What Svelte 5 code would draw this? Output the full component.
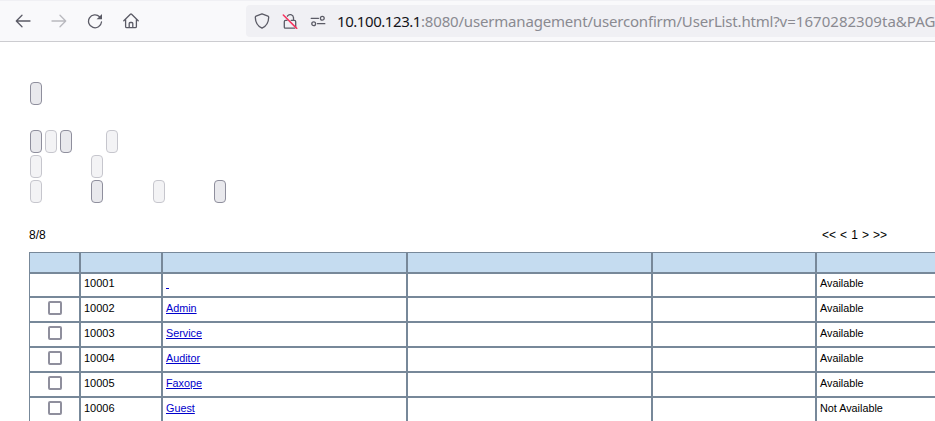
<script>
  const buttonRows = [
    [{ gap: 0 }],
    [{ gap: 0 }, { gap: 3, off: true }, { gap: 3 }, { gap: 34, off: true }],
    [{ gap: 0, off: true }, { gap: 49, off: true }],
    [{ gap: 0, off: true }, { gap: 49 }, { gap: 50, off: true }, { gap: 49 }]
  ];
  const users = [
    { id: '10001', name: '\u00a0', status: 'Available', fixed: true },
    { id: '10002', name: 'Admin', status: 'Available' },
    { id: '10003', name: 'Service', status: 'Available' },
    { id: '10004', name: 'Auditor', status: 'Available' },
    { id: '10005', name: 'Faxope', status: 'Available' },
    { id: '10006', name: 'Guest', status: 'Not Available' }
  ];
</script>

<div class="window">
  <header class="toolbar">
    <nav>
      <svg width="16" height="16" viewBox="0 0 16 16"><path d="M15 8H1.5M7 2.3 1.3 8 7 13.7" /></svg>
      <svg class="faded" width="16" height="16" viewBox="0 0 16 16"><path d="M1 8h13.5M9 2.3 14.7 8 9 13.7" /></svg>
      <svg width="16" height="16" viewBox="0 0 16 16"><path d="M12.6 3.7A6.5 6.5 0 1 0 14.5 9" /><path class="solid" d="M15 1v5.2H9.6z" /></svg>
      <svg width="16" height="16" viewBox="0 0 16 16"><path d="M.8 7.8 7.4 1.3a.9.9 0 0 1 1.2 0l6.6 6.5M2.6 6.3v7.2q0 1.2 1.2 1.2h8.4q1.2 0 1.2-1.2V6.3M6.2 14.5v-4q0-1 1-1h1.6q1 0 1 1v4" /></svg>
    </nav>
    <div class="address">
      <svg width="16" height="16" viewBox="0 0 16 16"><path d="M8 .8 14 3.1q.7.3.7 1.1C14.6 9 12.5 13 8 15.2 3.5 13 1.4 9 1.3 4.2q0-.8.7-1.1z" /></svg>
      <svg width="16" height="16" viewBox="0 0 16 16"><path d="M5.4 3.2A3.3 3.3 0 0 1 11.5 4.6V7.4M9.2 7.4h3.2q1.3 0 1.3 1.3V14M12.6 15.2h-9q-1.3 0-1.3-1.2V8.7q0-1.3 1.3-1.3H5" /><path class="slash" d="m1.3 2 13.4 13.4" /></svg>
      <svg width="16" height="16" viewBox="0 0 16 16"><path d="M1.2 5.3h7.3M7.5 10.7h7.3" /><circle cx="12.3" cy="5.2" r="1.9" /><circle cx="3.7" cy="10.7" r="1.9" /></svg>
      <span class="url"><span class="host">10.100.123.1</span><span class="path">:8080/usermanagement/userconfirm/UserList.html?</span><span class="query">v=1670282309ta&amp;PAG</span></span>
    </div>
  </header>

  <main>
    <section class="controls">
      {#each buttonRows as row}
        <div class="row">
          {#each row as b}
            <button aria-label="action" disabled={b.off} style="margin-left: {b.gap}px"></button>
          {/each}
        </div>
      {/each}
    </section>
    <div class="summary"><span class="count">8/8</span><span class="pager">&lt;&lt; &lt; 1 &gt; &gt;&gt;</span></div>
    <div class="table">
      <div class="line head">
        {#each Array(6) as _}<div class="cell"></div>{/each}
      </div>
      {#each users as u}
        <div class="line" class:first={u.fixed}>
          <div class="cell pick">{#if !u.fixed}<span class="box"></span>{/if}</div>
          <div class="cell">{u.id}</div>
          <div class="cell name"><span class="link">{u.name}</span></div>
          <div class="cell"></div>
          <div class="cell"></div>
          <div class="cell name">{u.status}</div>
        </div>
      {/each}
    </div>
  </main>
</div>

<style>
  .window { width: 935px; height: 421px; overflow: hidden; background: #fff; color: #000; font-family: "Liberation Sans", Arial, sans-serif; }
  .toolbar { box-sizing: border-box; height: 42px; display: flex; padding-top: 4px; background: #f9f9fb; border-top: 1px solid #f0f0f4; border-bottom: 1px solid #ccccd0; }
  nav { width: 246px; flex: none; height: 32px; display: flex; align-items: center; gap: 20px; padding-left: 15px; box-sizing: border-box; }
  svg { flex: none; display: block; fill: none; stroke: #5b5b66; stroke-width: 1.3; stroke-linecap: round; stroke-linejoin: round; }
  .faded { opacity: .4; }
  .solid { fill: #5b5b66; stroke: none; }
  .slash { stroke: #f8335f; stroke-width: 1.5; }
  .address { flex: 1; min-width: 0; height: 32px; box-sizing: border-box; display: flex; align-items: center; gap: 12px; padding-left: 8px; background: #f0f0f4; border-radius: 4px 0 0 4px; }
  .url { font: 15px/32px "Noto Sans", sans-serif; color: #8a8a91; white-space: nowrap; margin-left: -1px; }
  .host { color: #15141a; letter-spacing: -.44px; }
  .path { letter-spacing: -.18px; }
  .query { letter-spacing: .03px; }
  main { width: 1100px; padding: 40px 0 0 29px; }
  .controls { padding-left: 1px; }
  .row { display: flex; height: 25px; }
  .row:first-child { height: 48px; }
  button { appearance: none; box-sizing: border-box; width: 12px; height: 23px; padding: 0; border: 1px solid #8f8f9d; border-radius: 4px; background: #e9e9ed; }
  button:disabled { opacity: .5; }
  .summary { display: flex; height: 47px; padding-top: 23px; box-sizing: border-box; font-size: 12px; line-height: 14px; }
  .count { width: 793px; }
  .pager { word-spacing: .75px; }
  .table { display: flex; flex-direction: column; }
  .line { display: grid; grid-template-columns: 51px 82px 245px 245px 164px 245px; height: 25px; font-size: 11px; line-height: 13px; }
  .head { height: 21px; background: #c5dcf0; }
  .first { height: 24px; }
  .cell { box-sizing: border-box; border: 1px solid #778899; padding: 4px 3px; }
  .first .cell { padding-top: 3px; }
  .name { font-size: 10.8px; }
  .pick { display: flex; align-items: flex-start; justify-content: center; padding: 3px 0 0; }
  .box { width: 14px; height: 14px; box-sizing: border-box; border: 2px solid #8f8f9d; border-radius: 2px; }
  .link { color: #0000cc; text-decoration: underline; }
</style>
